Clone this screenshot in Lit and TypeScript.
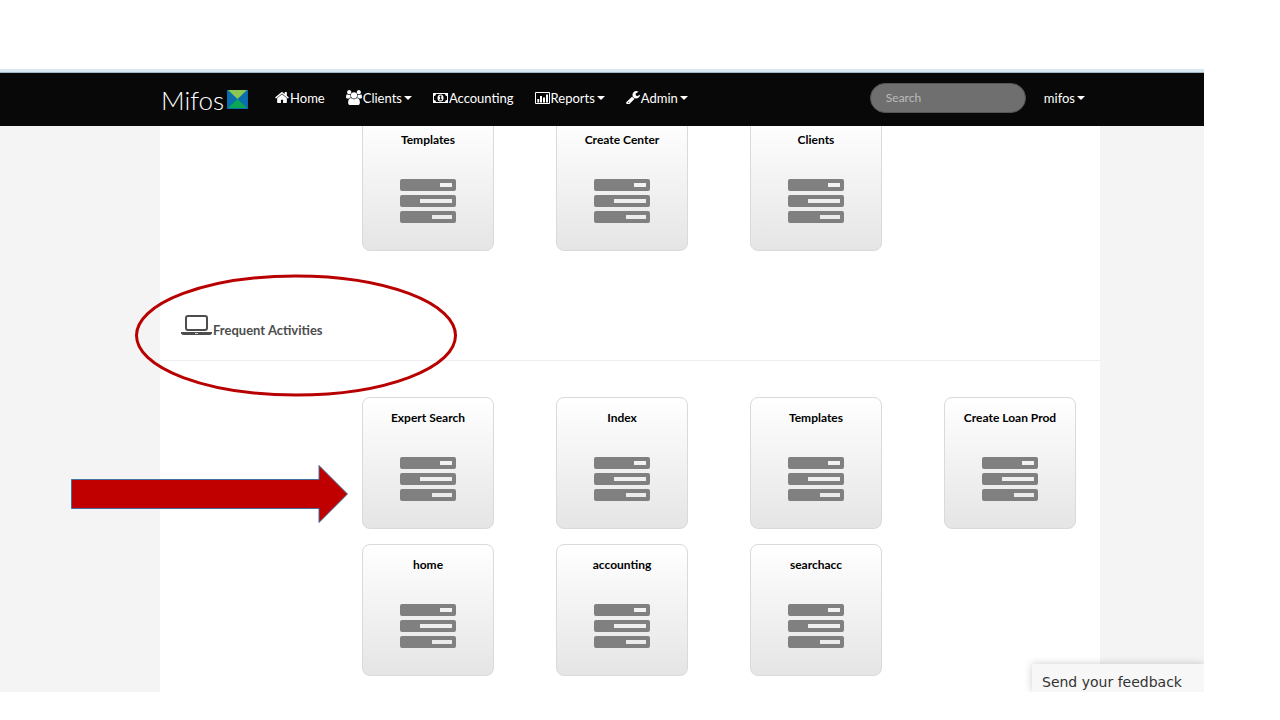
import { LitElement, html, css, svg, nothing } from "lit";
import { customElement, property } from "lit/decorators.js";

const homeIcon = html`<svg viewBox="64 128 1664 1536" width="14" height="13" aria-hidden="true"><path d="M1472 992v480q0 26-19 45t-45 19h-384v-384h-256v384h-384q-26 0-45-19t-19-45v-480q0-1 .5-3t.5-3l575-474 575 474q1 2 1 6zm223-69l-62 74q-8 9-21 11h-3q-13 0-21-7l-692-577-692 577q-12 8-24 7-13-2-21-11l-62-74q-8-10-7-23.5t11-21.5l719-599q32-26 76-26t76 26l244 204v-195q0-14 9-23t23-9h192q14 0 23 9t9 23v408l219 182q10 8 11 21.5t-7 23.5z"/></svg>`;
const groupIcon = html`<svg viewBox="0 0 1920 1792" width="16" height="15" aria-hidden="true"><path d="M593 896q-162 5-265 128h-134q-82 0-138-40.5t-56-118.5q0-353 124-353 6 0 43.5 21t97.5 42.5 119 21.5q67 0 133-23-5 37-5 66 0 139 81 256zm1071 637q0 120-73 189.5t-194 69.5h-874q-121 0-194-69.5t-73-189.5q0-53 3.5-103.5t14-109 26.5-108.5 43-97.5 62-81 85.5-53.5 111.5-20q10 0 43 21.5t73 48 107 48 135 21.5 135-21.5 107-48 73-48 43-21.5q61 0 111.5 20t85.5 53.5 62 81 43 97.5 26.5 108.5 14 109 3.5 103.5zm-1024-1277q0 106-75 181t-181 75-181-75-75-181 75-181 181-75 181 75 75 181zm704 384q0 159-112.5 271.5t-271.5 112.5-271.5-112.5-112.5-271.5 112.5-271.5 271.5-112.5 271.5 112.5 112.5 271.5zm576 225q0 78-56 118.5t-138 40.5h-134q-103-123-265-128 81-117 81-256 0-29-5-66 66 23 133 23 59 0 119-21.5t97.5-42.5 43.5-21q124 0 124 353zm-128-609q0 106-75 181t-181 75-181-75-75-181 75-181 181-75 181 75 75 181z"/></svg>`;
const moneyIcon = html`<svg viewBox="0 0 15 10" width="15" height="10" aria-hidden="true"><path fill-rule="evenodd" d="M0 0h15v10H0zM3 1a2 2 0 0 1-2 2v4a2 2 0 0 1 2 2h9a2 2 0 0 1 2-2V3a2 2 0 0 1-2-2z"/><ellipse cx="7.500" cy="5" rx="3" ry="3.500"/><path fill="#080808" d="M6.300 3.400 7.400 2.500h.9v3.800h.8v.9H6.200v-.9h.9V3.900l-.4.300z"/></svg>`;
const chartIcon = html`<svg viewBox="0 0 15 12" width="15" height="12" aria-hidden="true"><path fill-rule="evenodd" d="M1 0h13a1 1 0 0 1 1 1v10a1 1 0 0 1-1 1H1a1 1 0 0 1-1-1V1a1 1 0 0 1 1-1zm0 1v10h13V1z"/><path d="M2.300 7h1.900v3.500H2.300zM5 4h2v6.500H5zM8 5.500h2v5H8zM11 2.500h2v8h-2z"/></svg>`;
const wrenchIcon = html`<svg viewBox="64 128 1664 1536" width="14" height="13" aria-hidden="true"><path d="M448 1472q0-26-19-45t-45-19-45 19-19 45 19 45 45 19 45-19 19-45zm644-420l-682 682q-37 37-90 37-52 0-91-37l-106-108q-38-36-38-90 0-53 38-91l681-681q39 98 114.500 173.500t173.500 114.500zm634-435q0 39-23 106-47 134-164.500 217.500t-258.500 83.500q-185 0-316.500-131.500t-131.500-316.500 131.500-316.500 316.500-131.500q58 0 121.500 16.500t107.500 46.500q16 11 16 28t-16 28l-293 169v224l193 107q5-3 79-48.500t135.500-81 70.500-35.500q15 0 23.500 10t8.500 25z"/></svg>`;

interface NavItem {
  label: string;
  icon: unknown;
  menu: boolean;
}

const navItems: NavItem[] = [
  { label: "Home", icon: homeIcon, menu: false },
  { label: "Clients", icon: groupIcon, menu: true },
  { label: "Accounting", icon: moneyIcon, menu: false },
  { label: "Reports", icon: chartIcon, menu: true },
  { label: "Admin", icon: wrenchIcon, menu: true },
];

const recent = ["Templates", "Create Center", "Clients"];
const frequent = ["Expert Search", "Index", "Templates", "Create Loan Prod", "home", "accounting", "searchacc"];

@customElement("activity-tile")
class ActivityTile extends LitElement {
  @property() label = "";

  static styles = css`
    :host { display: block; }
    .tile {
      display: flex;
      flex-direction: column;
      align-items: center;
      gap: 29px;
      box-sizing: border-box;
      width: 100%;
      height: 132px;
      padding: 10px 0 0;
      border: 1px solid #dadada;
      border-radius: 8px;
      background: linear-gradient(#ffffff, #e5e5e5);
      color: #000;
      text-decoration: none;
      font-weight: 700;
      font-size: 12px;
      line-height: 20px;
      white-space: nowrap;
    }
    .tasks { fill: #808080; }
  `;

  render() {
    const bars = [40, 20, 32];
    return html`<a class="tile" href="#">
      <span>${this.label}</span>
      <svg class="tasks" viewBox="0 0 56 44" width="56" height="44" aria-hidden="true">
        ${bars.map((x, i) => svg`<path fill-rule="evenodd" d="M2 ${i * 16}h52a2 2 0 0 1 2 2v8a2 2 0 0 1-2 2H2a2 2 0 0 1-2-2v-8a2 2 0 0 1 2-2zM${x} ${i * 16 + 4}v4H52v-4z"/>`)}
      </svg>
    </a>`;
  }
}

@customElement("app-root")
class AppRoot extends LitElement {
  static styles = css`
    :host {
      display: block;
      font-family: Lato, "Open Sans", sans-serif;
      color: #000;
    }
    .slide {
      position: relative;
      display: flex;
      flex-direction: column;
      box-sizing: border-box;
      height: 100vh;
      padding: 69px 76px 28px 0;
      background: #fff;
      overflow: hidden;
    }
    .chrome {
      flex: none;
      height: 3px;
      background: #d9e7f0;
      border-bottom: 1px solid #a5b6c4;
    }
    .bar {
      flex: none;
      position: relative;
      z-index: 1;
      display: flex;
      align-items: center;
      box-sizing: border-box;
      height: 53px;
      padding: 0 119px 4px 161px;
      background: #080808;
      color: #fff;
      font-size: 13px;
      line-height: 20px;
    }
    .brand {
      display: flex;
      align-items: center;
      gap: 3px;
      margin-right: 27px;
      padding-top: 4px;
      color: #fff;
      text-decoration: none;
      font-weight: 300;
      font-size: 26px;
      line-height: 28px;
    }
    .links {
      display: flex;
      gap: 21px;
      margin: 0;
      padding: 0;
      list-style: none;
    }
    .link {
      display: flex;
      align-items: center;
      gap: 1px;
      color: #fff;
      fill: #fff;
      text-decoration: none;
    }
    .caret {
      margin-left: 1px;
      border: 4px solid transparent;
      border-top-color: #fff;
      border-bottom: 0;
    }
    .search {
      box-sizing: border-box;
      width: 156px;
      height: 30px;
      margin: 0 18px 0 auto;
      padding: 0 15px;
      border: 1px solid #555;
      border-radius: 15px;
      background: #6f6f6f;
      color: #fff;
      font: 12px Lato, sans-serif;
    }
    .search::placeholder { color: #bcbcbc; opacity: 1; }
    .body {
      position: relative;
      flex: 1;
      min-height: 0;
      padding: 0 104px 0 160px;
      background: #f4f4f4;
      overflow: hidden;
    }
    .sheet {
      min-height: 100%;
      margin-top: -7px;
      padding-bottom: 16px;
      background: #fff;
    }
    .tiles {
      display: grid;
      grid-template-columns: repeat(4, 132px);
      justify-content: space-between;
      row-gap: 15px;
      padding: 0 24px 0 202px;
    }
    .heading {
      display: flex;
      align-items: flex-end;
      gap: 1px;
      margin: 64px 0 36px;
      padding: 0 21px 20px;
      border-bottom: 1px solid #eee;
      color: #4d4d4d;
      fill: #4d4d4d;
      font-size: 13px;
      line-height: 20px;
      font-weight: 700;
    }
    .laptop { padding-bottom: 5px; }
    .feedback {
      position: absolute;
      right: 0;
      bottom: 0;
      box-sizing: border-box;
      width: 172px;
      height: 28px;
      padding: 8px 10px 0;
      border: 0;
      background: #f7f7f7;
      box-shadow: 0 0 8px rgba(0, 0, 0, 0.2);
      color: #333;
      text-align: left;
      font: 14px/20px "DejaVu Sans", sans-serif;
      white-space: nowrap;
    }
    .marks {
      position: absolute;
      left: 0;
      top: 0;
      z-index: 2;
      pointer-events: none;
    }
  `;

  render() {
    return html`
      <div class="slide">
        <div class="chrome"></div>
        <header class="bar">
          <a class="brand" href="#">Mifos
            <svg viewBox="0 0 22 20" width="21" height="19" aria-hidden="true">
              <path fill="#0b6fae" d="M0 0h22v20H0z"/>
              <path fill="#8cc751" d="M1 0h20L11 9.500z"/>
              <path fill="#0aa655" d="M1 19h20L11 9.500z"/>
            </svg>
          </a>
          <nav>
            <ul class="links">
              ${navItems.map((n) => html`<li><a class="link" href="#">${n.icon}<span>${n.label}</span>${n.menu ? html`<span class="caret"></span>` : nothing}</a></li>`)}
            </ul>
          </nav>
          <input class="search" type="search" placeholder="Search" aria-label="Search" />
          <a class="link" href="#"><span>mifos</span><span class="caret"></span></a>
        </header>
        <main class="body">
          <div class="sheet">
            <div class="tiles">${recent.map((l) => html`<activity-tile .label=${l}></activity-tile>`)}</div>
            <h2 class="heading">
              <svg class="laptop" viewBox="0 0 31 20" width="31" height="20" aria-hidden="true">
                <path fill-rule="evenodd" d="M7 0h17a3 3 0 0 1 3 3v10a3 3 0 0 1-3 3H7a3 3 0 0 1-3-3V3a3 3 0 0 1 3-3zm0 2a1 1 0 0 0-1 1v10a1 1 0 0 0 1 1h17a1 1 0 0 0 1-1V3a1 1 0 0 0-1-1z"/>
                <path fill-rule="evenodd" d="M0 17h31v1.500Q30 20 28 20H3Q1 20 0 18.500zM14 18v.700h3V18z"/>
              </svg>
              <span>Frequent Activities</span>
            </h2>
            <div class="tiles">${frequent.map((l) => html`<activity-tile .label=${l}></activity-tile>`)}</div>
          </div>
          <button class="feedback" type="button">Send your feedback</button>
        </main>
        <svg class="marks" width="480" height="560" viewBox="0 0 480 560" aria-hidden="true">
          <ellipse cx="296" cy="335.500" rx="159.500" ry="59.500" fill="none" stroke="#b80000" stroke-width="3"/>
          <path d="M71.500 479.500H319V465.500L347.500 494 319 522.500V508.500H71.500z" fill="#c00000" stroke="#41719c" stroke-width="1"/>
        </svg>
      </div>
    `;
  }
}
